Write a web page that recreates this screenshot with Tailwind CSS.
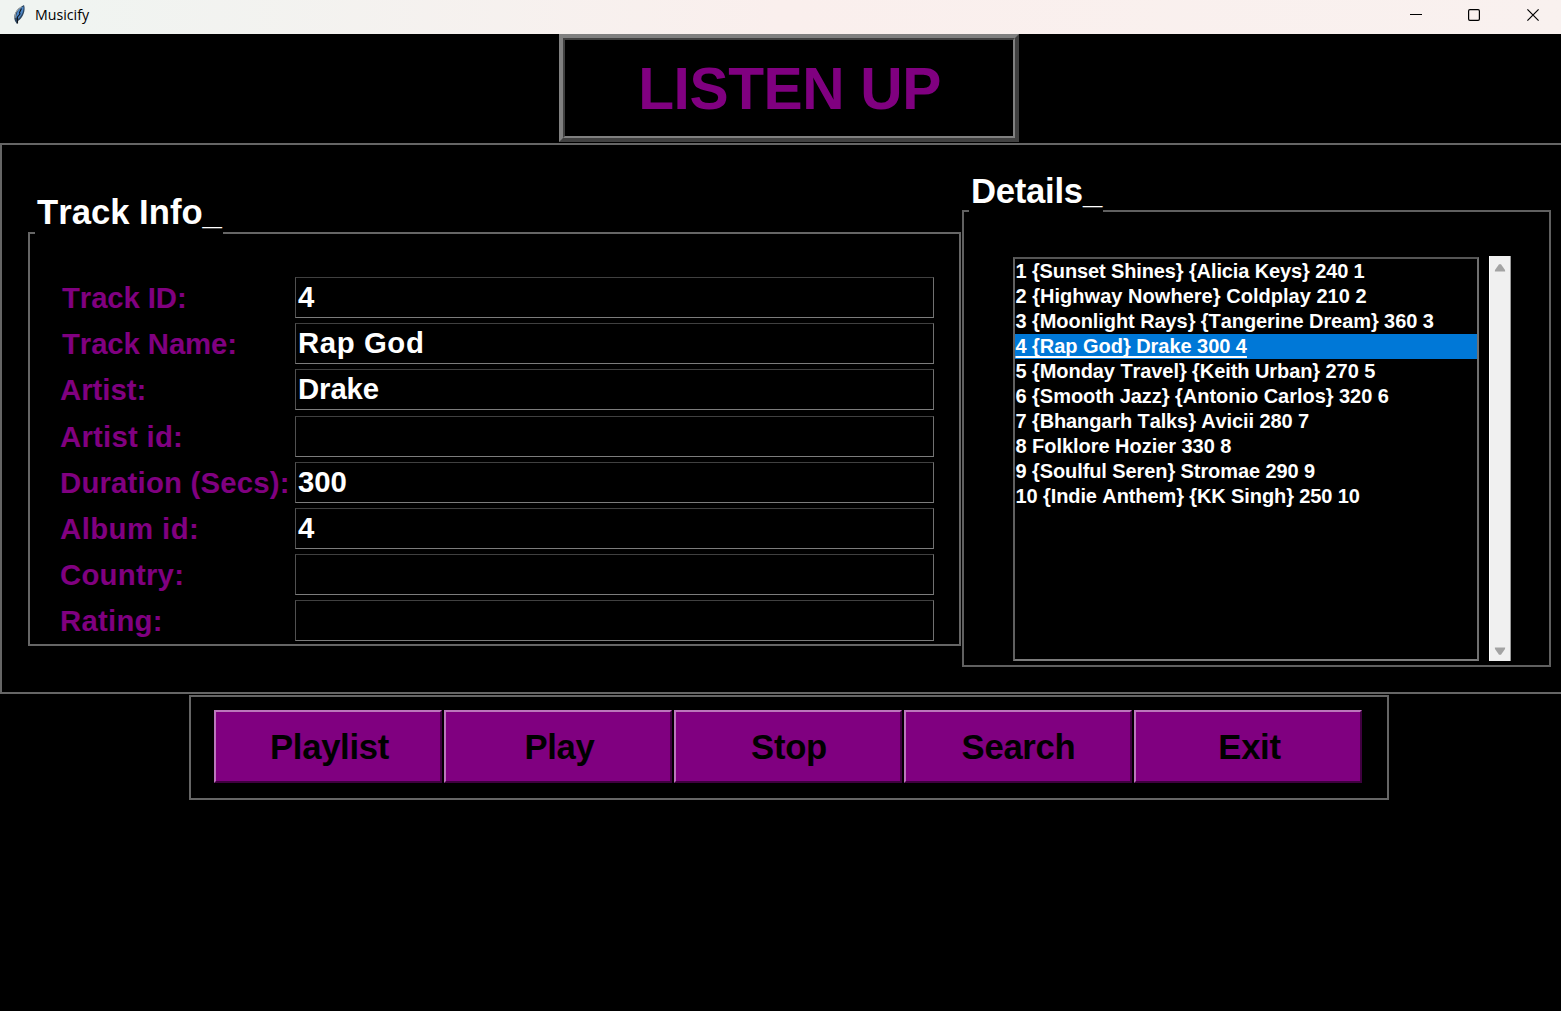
<!DOCTYPE html>
<html lang="en">
<head>
<meta charset="utf-8">
<title>Musicify</title>
<script src="https://cdn.jsdelivr.net/npm/@tailwindcss/browser@4"></script>
</head>
<body class="w-[1561px] h-[1011px] overflow-hidden bg-black font-['Liberation_Sans',Arial,sans-serif] font-bold whitespace-nowrap [font-kerning:none]">
<div class="flex h-[1011px] flex-col">
  <header class="flex h-[34px] shrink-0 items-center bg-linear-to-r from-[#f0f4f1] from-5% via-[#faefed] via-50% to-[#f9f1ef] font-['Open_Sans',sans-serif] font-normal text-black">
    <svg class="ml-[12px] -mt-[6px] h-[20px] w-[15px]" viewBox="0 0 15 20">
      <path d="M3 17C1 12 3 5 12 1C14 6 11 14 6 17L5 20Z" fill="#2c4560"/>
      <path d="M4 13C5 7 7 4 11.500 2.500C12 7 9 13 6 15Z" fill="#4d87c7"/>
      <path d="M9.500 4.500L7.500 8.500L8 10L5.500 13L5.500 19.500" fill="none" stroke="#10151c" stroke-width="1.100"/>
      <path d="M3 14L3.500 9L6.500 5L10 2.500" fill="none" stroke="#a4a8a4" stroke-width="1"/>
    </svg>
    <span class="ml-[8px] -mt-[5px] text-[14.2px] leading-5">Musicify</span>
    <div class="ml-auto mr-[22px] -mt-[4px] flex items-center">
      <svg class="mr-[46px] h-[12px] w-[12px]" viewBox="0 0 12 12"><path d="M0 5.500H12" stroke="#000" stroke-width="1"/></svg>
      <svg class="mr-[47px] h-[12px] w-[12px]" viewBox="0 0 12 12"><rect x=".6" y=".6" width="10.800" height="10.800" rx="1.300" fill="none" stroke="#000" stroke-width="1.200"/></svg>
      <svg class="h-[12px] w-[12px]" viewBox="0 0 12 12"><path d="M.4 .4L11.600 11.600M11.600 .4L.4 11.600" stroke="#000" stroke-width="1.200"/></svg>
    </div>
  </header>

  <div class="ml-[559px] h-[109px] w-[460px] shrink-0">
    <div class="h-[108px] border-4 border-t-[#808080] border-l-[#808080] border-r-[#404040] border-b-[#404040]">
      <h1 class="flex h-full items-center justify-center border-2 border-t-[#404040] border-l-[#404040] border-r-[#808080] border-b-[#808080] pt-[2px] pl-px text-[58.67px] leading-none tracking-[-0.4px] text-[#800080]">LISTEN UP</h1>
    </div>
  </div>

  <main class="flex h-[551px] w-[1570px] shrink-0 border-2 border-[#666]">
    <section class="relative mt-[87px] ml-[26px] h-[414px] w-[933px] shrink-0 border-2 border-[#666] pt-[43px] pl-[30px]">
      <h2 class="absolute -top-[42px] left-[5px] h-[43px] w-[188px] bg-black pl-[2px] text-[34.67px] leading-[40px] text-white">Track Info_</h2>
      <div class="grid h-[369.5px] grid-cols-[235px_639px] grid-rows-8 items-start text-[29.33px] leading-[41px] text-[#800080]">
        <label class="pl-[2px] tracking-[-0.1px]">Track ID:</label><div class="h-[41px] border border-t-[#404040] border-l-[#505050] border-r-[#707070] border-b-[#7c7c7c] pl-[2px] text-white leading-[38px]">4</div>
        <label class="pl-[2px] tracking-[-0.1px]">Track Name:</label><div class="h-[41px] border border-t-[#404040] border-l-[#505050] border-r-[#707070] border-b-[#7c7c7c] pl-[2px] text-white leading-[38px] tracking-[0.6px]">Rap God</div>
        <label>Artist:</label><div class="h-[41px] border border-t-[#404040] border-l-[#505050] border-r-[#707070] border-b-[#7c7c7c] pl-[2px] text-white leading-[38px] tracking-[-0.1px]">Drake</div>
        <label class="tracking-[0.25px]">Artist id:</label><div class="h-[41px] border border-t-[#404040] border-l-[#505050] border-r-[#707070] border-b-[#7c7c7c]"></div>
        <label class="tracking-[0.2px]">Duration (Secs):</label><div class="h-[41px] border border-t-[#404040] border-l-[#505050] border-r-[#707070] border-b-[#7c7c7c] pl-[2px] text-white leading-[38px]">300</div>
        <label class="tracking-[0.45px]">Album id:</label><div class="h-[41px] border border-t-[#404040] border-l-[#505050] border-r-[#707070] border-b-[#7c7c7c] pl-[2px] text-white leading-[38px]">4</div>
        <label class="tracking-[0.25px]">Country:</label><div class="h-[41px] border border-t-[#404040] border-l-[#505050] border-r-[#707070] border-b-[#7c7c7c]"></div>
        <label class="tracking-[0.25px]">Rating:</label><div class="h-[41px] border border-t-[#404040] border-l-[#505050] border-r-[#707070] border-b-[#7c7c7c]"></div>
      </div>
    </section>
    <section class="relative mt-[65px] ml-px flex h-[457px] w-[589px] shrink-0 border-2 border-[#606060] pt-[45px] pl-[49px]">
      <h2 class="absolute -top-[41px] left-[5px] h-[42px] w-[134px] bg-black pl-[2px] text-[34.67px] leading-[40px] tracking-[-0.25px] text-white">Details_</h2>
      <ul class="h-[404px] w-[466px] border-2 border-t-[#555] border-l-[#606060] border-r-[#707070] border-b-[#7c7c7c] text-[20px] leading-[25px] text-white *:pl-[0.5px]">
        <li class="tracking-[-0.12px]">1 {Sunset Shines} {Alicia Keys} 240 1</li>
        <li class="tracking-[0.03px]">2 {Highway Nowhere} Coldplay 210 2</li>
        <li class="tracking-[-0.07px]">3 {Moonlight Rays} {Tangerine Dream} 360 3</li>
        <li class="bg-[#0078d7] tracking-[-0.04px]"><span class="underline decoration-2 underline-offset-[3px] [text-decoration-skip-ink:none]">4 {Rap God} Drake 300 4</span></li>
        <li class="tracking-[-0.07px]">5 {Monday Travel} {Keith Urban} 270 5</li>
        <li class="tracking-[-0.03px]">6 {Smooth Jazz} {Antonio Carlos} 320 6</li>
        <li class="tracking-[-0.11px]">7 {Bhangarh Talks} Avicii 280 7</li>
        <li class="tracking-[-0.04px]">8 Folklore Hozier 330 8</li>
        <li class="tracking-[-0.09px]">9 {Soulful Seren} Stromae 290 9</li>
        <li class="tracking-[-0.1px]">10 {Indie Anthem} {KK Singh} 250 10</li>
      </ul>
      <div class="ml-[10px] -mt-px flex h-[405px] w-[22px] flex-col items-center justify-between border-x border-l-white border-r-[#999] bg-[#f0f0f0] pt-[7px] pb-[5px]">
        <svg class="h-[9px] w-[12px]" viewBox="0 0 12 9"><path d="M.8 8.500L1 7L5 1.200H7L11 7L11.200 8.500Z" fill="#a3a3a3"/></svg>
        <svg class="h-[9px] w-[12px]" viewBox="0 0 12 9"><path d="M.8 .5L1 2L5 7.800H7L11 2L11.200 .5Z" fill="#a3a3a3"/></svg>
      </div>
    </section>
  </main>

  <nav class="mt-px ml-[189px] grid h-[105px] w-[1200px] shrink-0 grid-cols-[repeat(5,230px)] items-start border-2 border-[#666] pt-[13px] pl-[23px] text-[34.67px] tracking-[-0.3px]">
    <button class="h-[73px] w-[228px] border-[2px] border-t-[#bb77bb] border-l-[#bb77bb] border-r-[#400040] border-b-[#400040] bg-[#800080] pl-[3px] text-black">Playlist</button>
    <button class="h-[73px] w-[228px] border-[2px] border-t-[#bb77bb] border-l-[#bb77bb] border-r-[#400040] border-b-[#400040] bg-[#800080] pl-[3px] text-black">Play</button>
    <button class="h-[73px] w-[228px] border-[2px] border-t-[#bb77bb] border-l-[#bb77bb] border-r-[#400040] border-b-[#400040] bg-[#800080] pl-[2px] text-black">Stop</button>
    <button class="h-[73px] w-[228px] border-[2px] border-t-[#bb77bb] border-l-[#bb77bb] border-r-[#400040] border-b-[#400040] bg-[#800080] pl-[1px] text-black">Search</button>
    <button class="h-[73px] w-[228px] border-[2px] border-t-[#bb77bb] border-l-[#bb77bb] border-r-[#400040] border-b-[#400040] bg-[#800080] pl-[3px] text-black">Exit</button>
  </nav>
</div>
</body>
</html>
